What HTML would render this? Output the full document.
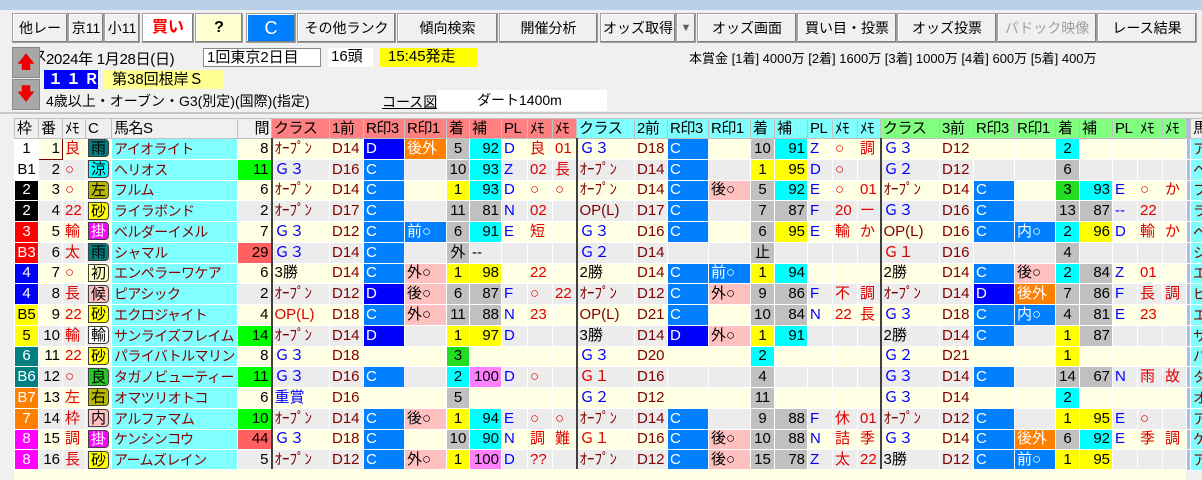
<!DOCTYPE html>
<html><head><meta charset="utf-8">
<style>
*{box-sizing:border-box;margin:0;padding:0}
body{width:1202px;height:480px;overflow:hidden;background:#f0f0f0;font-family:"Liberation Sans","Noto Sans CJK JP",sans-serif;font-size:15px;position:relative}
.a{position:absolute;white-space:nowrap}
.btn{position:absolute;top:13px;height:30px;border:1px solid #a0a0a0;background:#f0f0f0;text-align:center;line-height:28px;font-size:14px;box-shadow:inset -1px -1px 0 #808080,inset 1px 1px 0 #fff}
table{position:absolute;left:14px;top:118px;border-collapse:collapse;table-layout:fixed;width:1188px}
td{height:20.75px;border:1px solid #fff;padding:0 2px;white-space:nowrap;overflow:hidden;line-height:18px;font-size:15px}
tr.h td{height:20px;background:#f0f0f0;border-color:#c0c0c0;letter-spacing:-0.5px}
tr.h td.r{background:#ff8080}tr.h td.q{background:#80ffff}tr.h td.k{background:#80ff80}
tr.o td{background:#ffffe4}tr.e td{background:#ececec}
tr td.nm{background:#80ffff;color:#800000;font-size:14px;letter-spacing:-0.6px}
tr td.w1{background:#fff;color:#000}tr td.w2{background:#000;color:#fff}tr td.w3{background:#f00;color:#fff}tr td.w4{background:#00f;color:#fff}tr td.w5{background:#ff0;color:#000}tr td.w6{background:#008080;color:#fff}tr td.w7{background:#ff8000;color:#fff}tr td.w8{background:#ff00ff;color:#fff}
.wk{text-align:center}
.rt{text-align:right}.ct{text-align:center}
.red{color:#e00000}.blu{color:#0000ff}.mr{color:#800000}
tr td.y{background:#ff0}tr td.c{background:#00ffff}tr td.g{background:#c0c0c0}tr td.gr{background:#22dd22}tr td.m{background:#ff80ff}tr td.pk{background:#ffc0c0}tr td.or{background:#ff8000;color:#fff}tr td.bl{background:#0080ff;color:#fff}tr td.db{background:#0000ff;color:#fff}tr td.sal{background:#ff6060}tr td.lg{background:#00ff00}
td.cl{border-left:2px solid #404040}
.ic{display:inline-block;width:21px;height:18px;line-height:17px;border:1px solid #404040;border-radius:0 4px 4px 0;text-align:center;font-size:15px}
tr td.sb{background:#a0c0f0;padding:0}
</style></head><body>
<div class="a" style="left:0;top:0;width:1202px;height:10px;background:#b8d0e8"></div>
<div class="btn" style="left:12px;width:56px">他レース</div>
<div class="btn" style="left:68px;width:36px">京11</div>
<div class="btn" style="left:104px;width:36px">小11</div>
<div class="btn" style="left:142px;width:52px;background:#fff;color:#f00;font-weight:bold;font-size:16px">買い</div>
<div class="btn" style="left:195px;width:48px;background:#ffffd0;font-weight:bold;font-size:16px">?</div>
<div class="btn" style="left:246px;width:50px;background:#0080ff;color:#fff;font-size:18px">C</div>
<div class="btn" style="left:297px;width:99px">その他ランク</div>
<div class="btn" style="left:397px;width:101px">傾向検索</div>
<div class="btn" style="left:499px;width:99px">開催分析</div>
<div class="btn" style="left:600px;width:76px">オッズ取得</div>
<div class="btn" style="left:676px;width:20px;color:#606060;font-size:11px">▼</div>
<div class="btn" style="left:697px;width:100px">オッズ画面</div>
<div class="btn" style="left:797px;width:100px">買い目・投票</div>
<div class="btn" style="left:897px;width:100px">オッズ投票</div>
<div class="btn" style="left:997px;width:100px;color:#a0a0a0">パドック映像</div>
<div class="btn" style="left:1097px;width:100px">レース結果</div>

<div class="a" style="left:12px;top:47px;width:28px;height:31px;background:#a8a8a8;border:1px solid #888;color:#e00;text-align:center;font-size:18px;line-height:29px">🡅</div>
<div class="a" style="left:12px;top:79px;width:28px;height:31px;background:#a8a8a8;border:1px solid #888;color:#e00;text-align:center;font-size:18px;line-height:29px">🡇</div>
<div class="a" style="left:46px;top:48px;font-size:15px;letter-spacing:-0.3px">2024年 1月28日(日)</div>
<div class="a" style="left:203px;top:48px;width:118px;height:19px;background:#fff;border:1px solid #888;padding-left:3px;line-height:17px">1回東京2日目</div>
<div class="a" style="left:328px;top:48px;width:45px;height:19px;background:#fff;padding-left:3px;line-height:18px">16頭</div>
<div class="a" style="left:380px;top:48px;width:97px;height:19px;background:#ff0;padding-left:8px;line-height:18px">15:45発走</div>
<div class="a" style="left:44px;top:70px;width:54px;height:19px;background:#0000ff;color:#fff;font-weight:bold;padding-left:4px;line-height:19px;letter-spacing:3px">１１Ｒ</div>
<div class="a" style="left:104px;top:70px;width:120px;height:19px;background:#ffff90;padding-left:8px;line-height:19px">第38回根岸Ｓ</div>
<div class="a" style="left:46px;top:91px;font-size:14px">4歳以上・オーブン・G3(別定)(国際)(指定)</div>
<div class="a" style="left:382px;top:92px;font-size:14px;text-decoration:underline">コース図</div>
<div class="a" style="left:437px;top:90px;width:170px;height:21px;background:#fff;padding-left:40px;line-height:20px;font-size:14px">ダート1400m</div>
<div class="a" style="left:689px;top:48px;font-size:13px">本賞金 [1着] 4000万 [2着] 1600万 [3着] 1000万 [4着] 600万 [5着] 400万</div>
<div class="a" style="left:0;top:112px;width:1202px;height:2px;background:#c8c8c8"></div>

<table>
<colgroup>
<col style="width:24px"><col style="width:24px"><col style="width:23px"><col style="width:26px"><col style="width:126px"><col style="width:34px">
<col style="width:58px"><col style="width:34px"><col style="width:41px"><col style="width:42px"><col style="width:23px"><col style="width:32px"><col style="width:26px"><col style="width:25px"><col style="width:24px">
<col style="width:58px"><col style="width:33px"><col style="width:41px"><col style="width:42px"><col style="width:24px"><col style="width:33px"><col style="width:25px"><col style="width:25px"><col style="width:23px">
<col style="width:59px"><col style="width:34px"><col style="width:41px"><col style="width:41px"><col style="width:24px"><col style="width:33px"><col style="width:25px"><col style="width:25px"><col style="width:24px">
<col style="width:4px"><col style="width:12px">
</colgroup>
<tr class="h"><td>枠</td><td>番</td><td>ﾒﾓ</td><td>C</td><td>馬名S</td><td class="rt">間</td>
<td class="r">クラス</td><td class="r">1前</td><td class="r">R印3</td><td class="r">R印1</td><td class="r">着</td><td class="r">補</td><td class="r">PL</td><td class="r">ﾒﾓ</td><td class="r">ﾒﾓ</td>
<td class="q">クラス</td><td class="q">2前</td><td class="q">R印3</td><td class="q">R印1</td><td class="q">着</td><td class="q">補</td><td class="q">PL</td><td class="q">ﾒﾓ</td><td class="q">ﾒﾓ</td>
<td class="k">クラス</td><td class="k">3前</td><td class="k">R印3</td><td class="k">R印1</td><td class="k">着</td><td class="k">補</td><td class="k">PL</td><td class="k">ﾒﾓ</td><td class="k">ﾒﾓ</td><td class="sb"></td><td>馬</td></tr>

<tr class="o"><td class="w1 wk">1</td><td class="rt" style="border:1px solid #800000">1</td><td class="red">良</td><td><span class="ic" style="background:#008080">雨</span></td><td class="nm">アイオライト</td><td class="rt">8</td>
<td class="cl mr">ｵｰﾌﾟﾝ</td><td class="mr">D14</td><td class="db">D</td><td class="or">後外</td><td class="g ct">5</td><td class="c rt">92</td><td class="blu">D</td><td class="red">良</td><td class="red">01</td>
<td class="cl blu">Ｇ３</td><td class="mr">D18</td><td class="bl">C</td><td></td><td class="g ct">10</td><td class="c rt">91</td><td class="blu">Z</td><td class="red">○</td><td class="red">調</td>
<td class="cl blu">Ｇ３</td><td class="mr">D12</td><td></td><td></td><td class="c ct">2</td><td></td><td></td><td></td><td></td><td class="sb"></td><td class="nm">ア</td></tr>

<tr class="e"><td class="w1 wk">B1</td><td class="rt">2</td><td class="red">○</td><td><span class="ic" style="background:#00ffff">涼</span></td><td class="nm">ヘリオス</td><td class="lg rt">11</td>
<td class="cl blu">Ｇ３</td><td class="mr">D16</td><td class="bl">C</td><td></td><td class="g ct">10</td><td class="c rt">93</td><td class="blu">Z</td><td class="red">02</td><td class="red">長</td>
<td class="cl mr">ｵｰﾌﾟﾝ</td><td class="mr">D14</td><td class="bl">C</td><td></td><td class="y ct">1</td><td class="y rt">95</td><td class="blu">D</td><td class="red">○</td><td></td>
<td class="cl blu">Ｇ２</td><td class="mr">D12</td><td></td><td></td><td class="g ct">6</td><td></td><td></td><td></td><td></td><td class="sb"></td><td class="nm">ヘ</td></tr>

<tr class="o"><td class="w2 wk">2</td><td class="rt">3</td><td class="red">○</td><td><span class="ic" style="background:#b8b800">左</span></td><td class="nm">フルム</td><td class="rt">6</td>
<td class="cl mr">ｵｰﾌﾟﾝ</td><td class="mr">D14</td><td class="bl">C</td><td></td><td class="y ct">1</td><td class="c rt">93</td><td class="blu">D</td><td class="red">○</td><td class="red">○</td>
<td class="cl mr">ｵｰﾌﾟﾝ</td><td class="mr">D14</td><td class="bl">C</td><td class="pk">後○</td><td class="g ct">5</td><td class="c rt">92</td><td class="blu">E</td><td class="red">○</td><td class="red">01</td>
<td class="cl mr">ｵｰﾌﾟﾝ</td><td class="mr">D14</td><td class="bl">C</td><td></td><td class="gr ct">3</td><td class="c rt">93</td><td class="blu">E</td><td class="red">○</td><td class="red">か</td><td class="sb"></td><td class="nm">フ</td></tr>

<tr class="e"><td class="w2 wk">2</td><td class="rt">4</td><td class="red">22</td><td><span class="ic" style="background:#ffff00">砂</span></td><td class="nm">ライラボンド</td><td class="rt">2</td>
<td class="cl mr">ｵｰﾌﾟﾝ</td><td class="mr">D17</td><td class="bl">C</td><td></td><td class="g ct">11</td><td class="g rt">81</td><td class="blu">N</td><td class="red">02</td><td></td>
<td class="cl mr">OP(L)</td><td class="mr">D17</td><td class="bl">C</td><td></td><td class="g ct">7</td><td class="g rt">87</td><td class="blu">F</td><td class="red">20</td><td class="red">ー</td>
<td class="cl blu">Ｇ３</td><td class="mr">D16</td><td class="bl">C</td><td></td><td class="g ct">13</td><td class="g rt">87</td><td class="blu">--</td><td class="red">22</td><td></td><td class="sb"></td><td class="nm">ラ</td></tr>

<tr class="o"><td class="w3 wk">3</td><td class="rt">5</td><td class="red">輸</td><td><span class="ic" style="background:#ff00ff;color:#fff">掛</span></td><td class="nm">ベルダーイメル</td><td class="rt">7</td>
<td class="cl blu">Ｇ３</td><td class="mr">D12</td><td class="bl">C</td><td class="bl">前○</td><td class="g ct">6</td><td class="c rt">91</td><td class="blu">E</td><td class="red">短</td><td></td>
<td class="cl blu">Ｇ３</td><td class="mr">D16</td><td class="bl">C</td><td></td><td class="g ct">6</td><td class="y rt">95</td><td class="blu">E</td><td class="red">輸</td><td class="red">か</td>
<td class="cl mr">OP(L)</td><td class="mr">D16</td><td class="bl">C</td><td class="bl">内○</td><td class="c ct">2</td><td class="y rt">96</td><td class="blu">D</td><td class="red">輸</td><td class="red">か</td><td class="sb"></td><td class="nm">ベ</td></tr>

<tr class="e"><td class="w3 wk">B3</td><td class="rt">6</td><td class="red">太</td><td><span class="ic" style="background:#008080">雨</span></td><td class="nm">シャマル</td><td class="sal rt">29</td>
<td class="cl blu">Ｇ３</td><td class="mr">D14</td><td class="bl">C</td><td></td><td class="g ct">外</td><td>--</td><td></td><td></td><td></td>
<td class="cl blu">Ｇ２</td><td class="mr">D14</td><td></td><td></td><td class="g ct">止</td><td></td><td></td><td></td><td></td>
<td class="cl red">Ｇ１</td><td class="mr">D16</td><td></td><td></td><td class="g ct">4</td><td></td><td></td><td></td><td></td><td class="sb"></td><td class="nm">シ</td></tr>

<tr class="o"><td class="w4 wk">4</td><td class="rt">7</td><td class="red">○</td><td><span class="ic" style="background:#ffffc0">初</span></td><td class="nm">エンペラーワケア</td><td class="rt">6</td>
<td class="cl">3勝</td><td class="mr">D14</td><td class="bl">C</td><td class="pk">外○</td><td class="y ct">1</td><td class="y rt">98</td><td></td><td class="red">22</td><td></td>
<td class="cl">2勝</td><td class="mr">D14</td><td class="bl">C</td><td class="bl">前○</td><td class="y ct">1</td><td class="c rt">94</td><td></td><td></td><td></td>
<td class="cl">2勝</td><td class="mr">D14</td><td class="bl">C</td><td class="pk">後○</td><td class="c ct">2</td><td class="g rt">84</td><td class="blu">Z</td><td class="red">01</td><td></td><td class="sb"></td><td class="nm">エ</td></tr>

<tr class="e"><td class="w4 wk">4</td><td class="rt">8</td><td class="red">長</td><td><span class="ic" style="background:#ffc0c0">候</span></td><td class="nm">ピアシック</td><td class="rt">2</td>
<td class="cl mr">ｵｰﾌﾟﾝ</td><td class="mr">D12</td><td class="db">D</td><td class="pk">後○</td><td class="g ct">6</td><td class="g rt">87</td><td class="blu">F</td><td class="red">○</td><td class="red">22</td>
<td class="cl mr">ｵｰﾌﾟﾝ</td><td class="mr">D12</td><td class="bl">C</td><td class="pk">外○</td><td class="g ct">9</td><td class="g rt">86</td><td class="blu">F</td><td class="red">不</td><td class="red">調</td>
<td class="cl mr">ｵｰﾌﾟﾝ</td><td class="mr">D14</td><td class="db">D</td><td class="or">後外</td><td class="g ct">7</td><td class="g rt">86</td><td class="blu">F</td><td class="red">長</td><td class="red">調</td><td class="sb"></td><td class="nm">ピ</td></tr>

<tr class="o"><td class="w5 wk">B5</td><td class="rt">9</td><td class="red">22</td><td><span class="ic" style="background:#ffff00">砂</span></td><td class="nm">エクロジャイト</td><td class="rt">4</td>
<td class="cl red">OP(L)</td><td class="mr">D18</td><td class="bl">C</td><td class="pk">外○</td><td class="g ct">11</td><td class="g rt">88</td><td class="blu">N</td><td class="red">23</td><td></td>
<td class="cl mr">OP(L)</td><td class="mr">D21</td><td class="bl">C</td><td></td><td class="g ct">10</td><td class="g rt">84</td><td class="blu">N</td><td class="red">22</td><td class="red">長</td>
<td class="cl blu">Ｇ３</td><td class="mr">D18</td><td class="bl">C</td><td class="bl">内○</td><td class="g ct">4</td><td class="g rt">81</td><td class="blu">E</td><td class="red">23</td><td></td><td class="sb"></td><td class="nm">エ</td></tr>

<tr class="e"><td class="w5 wk">5</td><td class="rt">10</td><td class="red">輸</td><td><span class="ic" style="background:#fff">輸</span></td><td class="nm">サンライズフレイム</td><td class="lg rt">14</td>
<td class="cl mr">ｵｰﾌﾟﾝ</td><td class="mr">D14</td><td class="db">D</td><td></td><td class="y ct">1</td><td class="y rt">97</td><td class="blu">D</td><td></td><td></td>
<td class="cl">3勝</td><td class="mr">D14</td><td class="db">D</td><td class="pk">外○</td><td class="y ct">1</td><td class="c rt">91</td><td></td><td></td><td></td>
<td class="cl">2勝</td><td class="mr">D14</td><td class="bl">C</td><td></td><td class="y ct">1</td><td class="g rt">87</td><td></td><td></td><td></td><td class="sb"></td><td class="nm">サ</td></tr>

<tr class="o"><td class="w6 wk">6</td><td class="rt">11</td><td class="red">22</td><td><span class="ic" style="background:#ffff00">砂</span></td><td class="nm">パライバトルマリン</td><td class="rt">8</td>
<td class="cl blu">Ｇ３</td><td class="mr">D18</td><td></td><td></td><td class="gr ct">3</td><td></td><td></td><td></td><td></td>
<td class="cl blu">Ｇ３</td><td class="mr">D20</td><td></td><td></td><td class="c ct">2</td><td></td><td></td><td></td><td></td>
<td class="cl blu">Ｇ２</td><td class="mr">D21</td><td></td><td></td><td class="y ct">1</td><td></td><td></td><td></td><td></td><td class="sb"></td><td class="nm">パ</td></tr>

<tr class="e"><td class="w6 wk">B6</td><td class="rt">12</td><td class="red">○</td><td><span class="ic" style="background:#22cc22">良</span></td><td class="nm">タガノビューティー</td><td class="lg rt">11</td>
<td class="cl blu">Ｇ３</td><td class="mr">D16</td><td class="bl">C</td><td></td><td class="c ct">2</td><td class="m rt">100</td><td class="blu">D</td><td class="red">○</td><td></td>
<td class="cl red">Ｇ１</td><td class="mr">D16</td><td></td><td></td><td class="g ct">4</td><td></td><td></td><td></td><td></td>
<td class="cl blu">Ｇ３</td><td class="mr">D14</td><td class="bl">C</td><td></td><td class="g ct">14</td><td class="g rt">67</td><td class="blu">N</td><td class="red">雨</td><td class="red">故</td><td class="sb"></td><td class="nm">タ</td></tr>

<tr class="o"><td class="w7 wk">B7</td><td class="rt">13</td><td class="red">左</td><td><span class="ic" style="background:#b8b800">右</span></td><td class="nm">オマツリオトコ</td><td class="rt">6</td>
<td class="cl blu">重賞</td><td class="mr">D16</td><td></td><td></td><td class="g ct">5</td><td></td><td></td><td></td><td></td>
<td class="cl blu">Ｇ２</td><td class="mr">D12</td><td></td><td></td><td class="g ct">11</td><td></td><td></td><td></td><td></td>
<td class="cl blu">Ｇ３</td><td class="mr">D14</td><td></td><td></td><td class="c ct">2</td><td></td><td></td><td></td><td></td><td class="sb"></td><td class="nm">オ</td></tr>

<tr class="e"><td class="w7 wk">7</td><td class="rt">14</td><td class="red">枠</td><td><span class="ic" style="background:#ffc0c0">内</span></td><td class="nm">アルファマム</td><td class="lg rt">10</td>
<td class="cl mr">ｵｰﾌﾟﾝ</td><td class="mr">D14</td><td class="bl">C</td><td class="pk">後○</td><td class="y ct">1</td><td class="c rt">94</td><td class="blu">E</td><td class="red">○</td><td class="red">○</td>
<td class="cl mr">ｵｰﾌﾟﾝ</td><td class="mr">D14</td><td class="bl">C</td><td></td><td class="g ct">9</td><td class="g rt">88</td><td class="blu">F</td><td class="red">休</td><td class="red">01</td>
<td class="cl mr">ｵｰﾌﾟﾝ</td><td class="mr">D12</td><td class="bl">C</td><td></td><td class="y ct">1</td><td class="y rt">95</td><td class="blu">E</td><td class="red">○</td><td></td><td class="sb"></td><td class="nm">ア</td></tr>

<tr class="o"><td class="w8 wk">8</td><td class="rt">15</td><td class="red">調</td><td><span class="ic" style="background:#ff00ff;color:#fff">掛</span></td><td class="nm">ケンシンコウ</td><td class="sal rt">44</td>
<td class="cl blu">Ｇ３</td><td class="mr">D18</td><td class="bl">C</td><td></td><td class="g ct">10</td><td class="c rt">90</td><td class="blu">N</td><td class="red">調</td><td class="red">難</td>
<td class="cl red">Ｇ１</td><td class="mr">D16</td><td class="bl">C</td><td class="pk">後○</td><td class="g ct">10</td><td class="g rt">88</td><td class="blu">N</td><td class="red">詰</td><td class="red">季</td>
<td class="cl blu">Ｇ３</td><td class="mr">D14</td><td class="bl">C</td><td class="or">後外</td><td class="g ct">6</td><td class="c rt">92</td><td class="blu">E</td><td class="red">季</td><td class="red">調</td><td class="sb"></td><td class="nm">ケ</td></tr>

<tr class="e"><td class="w8 wk">8</td><td class="rt">16</td><td class="red">長</td><td><span class="ic" style="background:#ffff00">砂</span></td><td class="nm">アームズレイン</td><td class="rt">5</td>
<td class="cl mr">ｵｰﾌﾟﾝ</td><td class="mr">D12</td><td class="bl">C</td><td class="pk">外○</td><td class="y ct">1</td><td class="m rt">100</td><td class="blu">D</td><td class="red">??</td><td></td>
<td class="cl mr">ｵｰﾌﾟﾝ</td><td class="mr">D12</td><td class="bl">C</td><td class="pk">後○</td><td class="g ct">15</td><td class="g rt">78</td><td class="blu">Z</td><td class="red">太</td><td class="red">22</td>
<td class="cl">3勝</td><td class="mr">D12</td><td class="bl">C</td><td class="bl">前○</td><td class="y ct">1</td><td class="y rt">95</td><td></td><td></td><td></td><td class="sb"></td><td class="nm">ア</td></tr>
</table>
<div class="a" style="left:14px;top:469px;width:1172px;height:11px;background:#ffffe8"></div>
</body></html>
